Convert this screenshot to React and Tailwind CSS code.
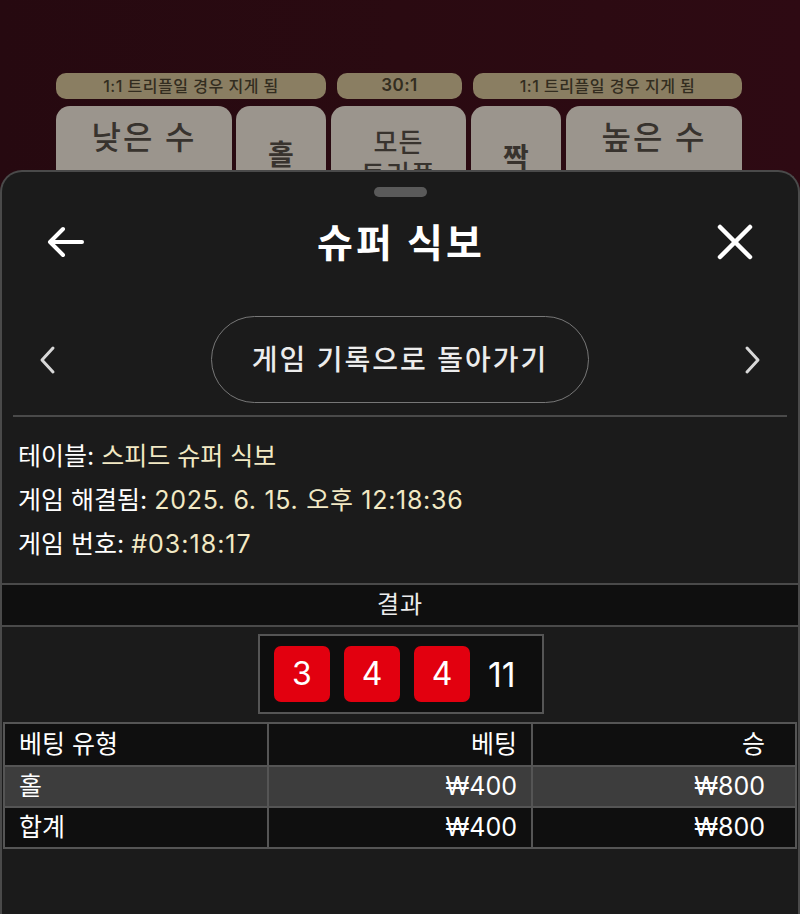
const font = { fontFamily: '"Inter", "Noto Sans CJK KR", "Noto Sans", sans-serif' };

const rows = [
  { type: "홀", bet: "₩400", win: "₩800", bg: "bg-[#3d3d3d]" },
  { type: "합계", bet: "₩400", win: "₩800", bg: "bg-[#0f0f0f]" },
];

const Chevron = ({ flip }) => (
  <svg width="18" height="30" viewBox="0 0 18 30" fill="none" stroke="#d8d8d8" strokeWidth="3" strokeLinecap="round" strokeLinejoin="round" className={flip ? "rotate-180" : ""}>
    <path d="M15 3L4 15L15 27" />
  </svg>
);

const App = () => {
  return (
    <div className="w-[800px] h-[914px] overflow-hidden bg-[#1b1b1b]" style={font}>
      {/* Game table behind the sheet */}
      <div className="h-[190px] overflow-hidden bg-gradient-to-r from-[#260910] via-[#2a0a11] to-[#2e0a13]">
        <div className="flex pt-[73px] pl-[56px] gap-[11px] text-[16px] tracking-[0.5px] font-medium text-[#332d20]">
          <div className="w-[270px] h-[26px] rounded-[10px] bg-[#8a7e62] flex items-center justify-center">
            1:1 트리플일 경우 지게 됨
          </div>
          <div className="w-[125px] h-[26px] rounded-[10px] bg-[#8a7e62] flex items-center justify-center text-[17px] font-semibold">
            30:1
          </div>
          <div className="w-[269px] h-[26px] rounded-[10px] bg-[#8a7e62] flex items-center justify-center">
            1:1 트리플일 경우 지게 됨
          </div>
        </div>
        <div className="flex pt-[7px] pl-[56px] text-[#38332e]">
          <div className="w-[176px] h-[100px] rounded-t-[14px] bg-[#9b958d] flex justify-center pt-[14px] text-[32px] tracking-[2px] leading-[36px] font-medium">
            낮은 수
          </div>
          <div className="ml-[4px] w-[90px] h-[100px] rounded-t-[14px] bg-[#9b958d] flex justify-center pt-[34px] text-[28px] leading-[30px] font-bold">
            홀
          </div>
          <div className="ml-[5px] w-[135px] h-[100px] rounded-t-[14px] bg-[#9b958d] flex flex-col items-center pt-[21px] text-[26px] tracking-[1px] leading-[32px] font-medium">
            <span>모든</span>
            <span>트리플</span>
          </div>
          <div className="ml-[5px] w-[90px] h-[100px] rounded-t-[14px] bg-[#9b958d] flex justify-center pt-[37px] text-[28px] leading-[30px] font-bold">
            짝
          </div>
          <div className="ml-[5px] w-[176px] h-[100px] rounded-t-[14px] bg-[#9b958d] flex justify-center pt-[14px] text-[32px] tracking-[2px] leading-[36px] font-medium">
            높은 수
          </div>
        </div>
      </div>

      {/* Bottom sheet */}
      <div className="relative -mt-[20px] h-[744px] rounded-t-[22px] border-2 border-b-0 border-[#4a4a4a] bg-[#1b1b1b] text-white">
        <div className="pt-[15px]">
          <div className="mx-auto w-[53px] h-[10px] rounded-full bg-[#5a5a5a]" />
        </div>

        {/* Header */}
        <div className="h-[90px] flex items-center justify-between px-[45px]">
          <svg width="38" height="32" viewBox="0 0 38 32" fill="none" stroke="white" strokeWidth="4" strokeLinecap="round" strokeLinejoin="round">
            <path d="M35 16H4" />
            <path d="M16 3L3 16L16 29" />
          </svg>
          <h1 className="text-[39px] tracking-[3px] font-bold leading-none">슈퍼 식보</h1>
          <svg width="36" height="36" viewBox="0 0 36 36" fill="none" stroke="white" strokeWidth="4.5" strokeLinecap="round">
            <path d="M3 3L33 33" />
            <path d="M33 3L3 33" />
          </svg>
        </div>

        {/* Navigation */}
        <div className="mt-[29px] flex items-center justify-between pl-[36px] pr-[36px]">
          <Chevron />
          <button className="w-[378px] h-[87px] rounded-full border border-[#777777] text-[28px] tracking-[2px] font-medium text-[#ececec]">
            게임 기록으로 돌아가기
          </button>
          <Chevron flip />
        </div>

        <div className="mt-[12px] mx-[11px] h-[2px] bg-[#4a4a4a]" />

        {/* Game info */}
        <div className="pl-[16px] pt-[17px] pb-[17px] text-[25px] leading-[44px]">
          <p>
            테이블: <span className="text-[#f2e9c4]">스피드 슈퍼 식보</span>
          </p>
          <p>
            게임 해결됨: <span className="text-[#f2e9c4] tracking-[0.7px]">2025. 6. 15. 오후 12:18:36</span>
          </p>
          <p>
            게임 번호: <span className="text-[#f2e9c4] tracking-[1px]">#03:18:17</span>
          </p>
        </div>

        {/* Result */}
        <div className="border-t-2 border-[#4a4a4a]">
          <div className="h-[40px] bg-[#0f0f0f] flex items-center justify-center text-[24px] tracking-[1px] text-[#ececec]">
            결과
          </div>
          <div className="border-t-2 border-[#4a4a4a] pt-[7px] pb-[8px] flex justify-center">
            <div className="ml-[2px] w-[286px] h-[80px] border-2 border-[#555555] bg-[#0e0e0e] flex items-center pl-[14px] gap-[14px]">
              {[3, 4, 4].map((d, i) => (
                <div key={i} className="w-[56px] h-[56px] rounded-[7px] bg-[#e2000f] flex items-center justify-center text-[32px]">
                  {d}
                </div>
              ))}
              <span className="ml-[4px] text-[34px]">11</span>
            </div>
          </div>
        </div>

        {/* Bets table */}
        <table className="ml-[1px] w-[794px] border-collapse text-[25px] table-fixed">
          <thead>
            <tr className="h-[43px] bg-[#0f0f0f]">
              <th className="border-2 border-[#555555] font-normal text-left pl-[14px]">베팅 유형</th>
              <th className="border-2 border-[#555555] font-normal text-right pr-[14px]">베팅</th>
              <th className="border-2 border-[#555555] font-normal text-right pr-[30px]">승</th>
            </tr>
          </thead>
          <tbody>
            {rows.map((r) => (
              <tr key={r.type} className={`h-[41px] ${r.bg}`}>
                <td className="border-2 border-[#555555] pl-[14px]">{r.type}</td>
                <td className="border-2 border-[#555555] text-right pr-[14px]">{r.bet}</td>
                <td className="border-2 border-[#555555] text-right pr-[30px]">{r.win}</td>
              </tr>
            ))}
          </tbody>
        </table>
      </div>
    </div>
  );
};

export default App;
